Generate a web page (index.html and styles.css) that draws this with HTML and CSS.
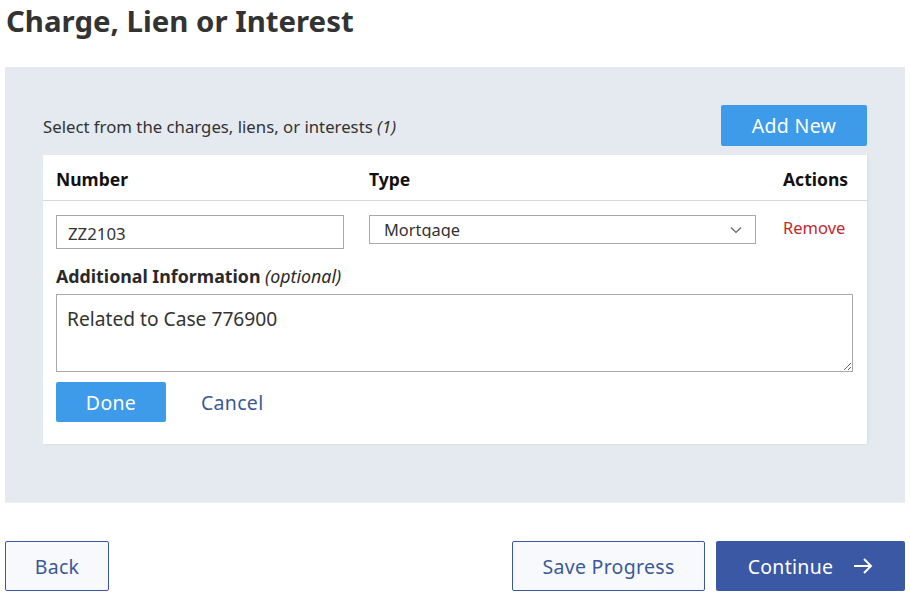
FILE: index.html
```html
<!DOCTYPE html>
<html lang="en">
<head>
  <meta charset="UTF-8">
  <meta name="viewport" content="width=device-width, initial-scale=1.0">
  <title>Charge, Lien or Interest</title>
  <link rel="stylesheet" href="styles.css">
</head>
<body>
  <div class="page">
    <h1>Charge, Lien or Interest</h1>

    <div class="panel">
      <div class="toolbar">
        <p class="hint">Select from the charges, liens, or interests <em>(1)</em></p>
        <button class="btn btn-light-blue add-new">Add New</button>
      </div>

      <div class="card">
        <div class="row head">
          <div>Number</div>
          <div>Type</div>
          <div>Actions</div>
        </div>

        <div class="row body">
          <div><input type="text" class="number-input" value="ZZ2103"></div>
          <div class="select">
            <span class="select-value">Mortgage</span>
            <svg class="chevron" width="12" height="8" viewBox="0 0 12 8">
              <path d="M1 1.5 L6 6.5 L11 1.5" fill="none" stroke="#666" stroke-width="1.2"/>
            </svg>
          </div>
          <div><a href="#" class="remove">Remove</a></div>
        </div>

        <label class="field-label" for="info">Additional Information <em>(optional)</em></label>
        <textarea id="info" class="info">Related to Case 776900</textarea>

        <div class="card-actions">
          <button class="btn btn-light-blue done">Done</button>
          <a href="#" class="cancel">Cancel</a>
        </div>
      </div>
    </div>

    <div class="footer-nav">
      <button class="btn btn-outline back">Back</button>
      <div class="footer-right">
        <button class="btn btn-outline save">Save Progress</button>
        <button class="btn btn-primary continue">
          Continue
          <svg width="20" height="18" viewBox="0 0 20 18">
            <path d="M1 9 H18 M11 2 L18 9 L11 16" fill="none" stroke="#fff" stroke-width="2"/>
          </svg>
        </button>
      </div>
    </div>
  </div>
</body>
</html>
```

FILE: styles.css
```css
:root {
  --color-text: #333;
  --color-panel: #e5eaf1;
  --color-light-blue: #3d9be9;
  --color-primary: #3a58a4;
  --color-link: #3b5998;
  --color-error: #c1272d;
}

* {
  margin: 0;
  padding: 0;
  box-sizing: border-box;
}

body {
  background: #fff;
  font-family: 'Noto Sans', 'Open Sans', sans-serif;
  color: var(--color-text);
}

.page {
  width: 900px;
  margin-left: 5px;
}

h1 {
  font-size: 29.4px;
  font-weight: 700;
  line-height: 42px;
  margin-left: 1px;
  color: #333;
}

.panel {
  margin-top: 25px;
  background: var(--color-panel);
  padding: 38px 38px 58px;
  border-bottom: 1px solid #edf0f5;
}

.toolbar {
  display: flex;
  justify-content: space-between;
  align-items: center;
  margin-bottom: 9px;
}

.hint {
  font-size: 16.75px;
  padding-top: 1px;
}

.btn {
  font-family: inherit;
  font-size: 19.5px;
  border: none;
  border-radius: 2px;
  cursor: pointer;
  letter-spacing: 0.3px;
}

.btn-light-blue {
  background: var(--color-light-blue);
  color: #fff;
}

.add-new {
  width: 146px;
  height: 41px;
}

.card {
  background: #fff;
  padding: 0 14px 22px 13px;
  box-shadow: 1px 1px 2px rgba(0, 0, 0, 0.06);
}

.row {
  display: grid;
  grid-template-columns: 313px 414px 1fr;
}

.row.head {
  height: 46px;
  align-items: center;
  font-weight: 700;
  font-size: 17.5px;
  color: #111;
  border-bottom: 1px solid #d5d8dc;
  margin: 0 -14px 0 -13px;
  padding: 2px 14px 0 13px;
}

.row.body {
  padding-top: 14px;
  align-items: start;
}

.number-input {
  width: 288px;
  height: 34px;
  border: 1px solid #aaa;
  padding: 3px 11px 0;
  font-family: inherit;
  font-size: 16.8px;
  color: #333;
}

.select {
  width: 387px;
  height: 29px;
  border: 1px solid #aaa;
  display: flex;
  align-items: flex-start;
  justify-content: space-between;
  padding: 3px 13px 0 14px;
  overflow: hidden;
}

.select-value {
  display: block;
  font-size: 16.4px;
  line-height: 22px;
  height: 19px;
  overflow: hidden;
  color: #333;
}

.chevron {
  align-self: center;
  margin-top: -2px;
}

.remove {
  color: var(--color-error);
  text-decoration: none;
  font-size: 16.5px;
  line-height: 25px;
}

.field-label {
  display: block;
  font-weight: 700;
  font-size: 17.8px;
  color: #2a2a2a;
  margin-top: 14px;
  line-height: 26px;
}

.field-label em {
  font-weight: 400;
}

.info {
  display: block;
  width: 100%;
  height: 78px;
  margin-top: 5px;
  border: 1px solid #aaa;
  padding: 10px 10px;
  font-family: inherit;
  font-size: 19.2px;
  color: #333;
  resize: vertical;
}

.card-actions {
  display: flex;
  align-items: center;
  gap: 35px;
  margin-top: 10px;
}

.done {
  width: 110px;
  height: 40px;
}

.cancel {
  color: var(--color-link);
  text-decoration: none;
  font-size: 19.5px;
  letter-spacing: 0.3px;
}

.footer-nav {
  display: flex;
  justify-content: space-between;
  margin-top: 38px;
}

.footer-right {
  display: flex;
  gap: 11px;
}

.btn-outline {
  height: 50px;
  background: #f8f9fc;
  border: 1px solid var(--color-primary);
  color: var(--color-link);
}

.back {
  width: 104px;
}

.save {
  width: 193px;
}

.btn-primary {
  height: 50px;
  width: 189px;
  background: var(--color-primary);
  color: #fff;
  display: flex;
  align-items: center;
  justify-content: center;
  gap: 20px;
}
```
